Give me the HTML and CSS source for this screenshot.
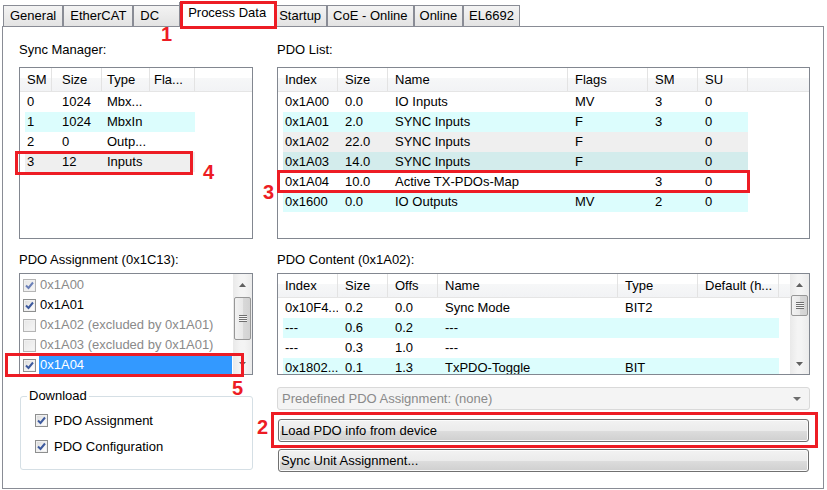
FILE: index.html
```html
<!DOCTYPE html>
<html>
<head>
<meta charset="utf-8">
<title>Process Data</title>
<link rel="stylesheet" href="styles.css">
</head>
<body>
<div class="tabstrip">
  <div class="tab">General</div>
  <div class="tab">EtherCAT</div>
  <div class="tab tab-dc">DC</div>
  <div class="tab active">Process Data</div>
  <div class="tab">Startup</div>
  <div class="tab">CoE - Online</div>
  <div class="tab">Online</div>
  <div class="tab">EL6692</div>
</div>

<div class="page">
  <div class="col left">
    <div class="label">Sync Manager:</div>
    <div class="lv sm">
      <div class="lv-main">
        <div class="lv-head">
          <div class="hc c1">SM</div><div class="hc c2">Size</div><div class="hc c3">Type</div><div class="hc c4">Fla...</div><div class="hfill"></div>
        </div>
        <div class="row"><div class="cell c1">0</div><div class="cell c2">1024</div><div class="cell c3">Mbx...</div><div class="cell c4"></div></div>
        <div class="row cyan"><div class="cell c1">1</div><div class="cell c2">1024</div><div class="cell c3">MbxIn</div><div class="cell c4"></div></div>
        <div class="row"><div class="cell c1">2</div><div class="cell c2">0</div><div class="cell c3">Outp...</div><div class="cell c4"></div></div>
        <div class="row gray"><div class="cell c1">3</div><div class="cell c2">12</div><div class="cell c3">Inputs</div><div class="cell c4"></div></div>
      </div>
    </div>

    <div class="label second">PDO Assignment (0x1C13):</div>
    <div class="cl">
      <div class="cl-main">
        <div class="cl-row dis"><span class="cb dis"><svg width="9" height="9" viewBox="0 0 9 9"><polyline points="1,4.5 3.5,7 8,1.5" fill="none" stroke="#6b80b8" stroke-width="2"/></svg></span><span class="cl-text">0x1A00</span></div>
        <div class="cl-row"><span class="cb"><svg width="9" height="9" viewBox="0 0 9 9"><polyline points="1,4.5 3.5,7 8,1.5" fill="none" stroke="#3d5a9e" stroke-width="2"/></svg></span><span class="cl-text">0x1A01</span></div>
        <div class="cl-row dis"><span class="cb dis"></span><span class="cl-text">0x1A02 (excluded by 0x1A01)</span></div>
        <div class="cl-row dis"><span class="cb dis"></span><span class="cl-text">0x1A03 (excluded by 0x1A01)</span></div>
        <div class="cl-row sel"><span class="cb"><svg width="9" height="9" viewBox="0 0 9 9"><polyline points="1,4.5 3.5,7 8,1.5" fill="none" stroke="#3d5a9e" stroke-width="2"/></svg></span><span class="cl-text">0x1A04</span></div>
      </div>
      <div class="sb">
        <div class="sb-btn"><svg width="7" height="4" viewBox="0 0 7 4"><polygon points="0,4 7,4 3.5,0" fill="#606060"/></svg></div>
        <div class="sb-track"><div class="sb-thumb tall"><span class="grip"></span></div></div>
        <div class="sb-btn"><svg width="7" height="4" viewBox="0 0 7 4"><polygon points="0,0 7,0 3.5,4" fill="#606060"/></svg></div>
      </div>
    </div>

    <fieldset class="group">
      <legend>Download</legend>
      <div class="opt"><span class="cb"><svg width="9" height="9" viewBox="0 0 9 9"><polyline points="1,4.5 3.5,7 8,1.5" fill="none" stroke="#3d5a9e" stroke-width="2"/></svg></span><span>PDO Assignment</span></div>
      <div class="opt"><span class="cb"><svg width="9" height="9" viewBox="0 0 9 9"><polyline points="1,4.5 3.5,7 8,1.5" fill="none" stroke="#3d5a9e" stroke-width="2"/></svg></span><span>PDO Configuration</span></div>
    </fieldset>
  </div>

  <div class="col right">
    <div class="label">PDO List:</div>
    <div class="lv pl">
      <div class="lv-main">
        <div class="lv-head">
          <div class="hc c1">Index</div><div class="hc c2">Size</div><div class="hc c3">Name</div><div class="hc c4">Flags</div><div class="hc c5">SM</div><div class="hc c6">SU</div><div class="hfill"></div>
        </div>
        <div class="row"><div class="cell c1">0x1A00</div><div class="cell c2">0.0</div><div class="cell c3">IO Inputs</div><div class="cell c4">MV</div><div class="cell c5">3</div><div class="cell c6">0</div></div>
        <div class="row cyan"><div class="cell c1">0x1A01</div><div class="cell c2">2.0</div><div class="cell c3">SYNC Inputs</div><div class="cell c4">F</div><div class="cell c5">3</div><div class="cell c6">0</div></div>
        <div class="row gray"><div class="cell c1">0x1A02</div><div class="cell c2">22.0</div><div class="cell c3">SYNC Inputs</div><div class="cell c4">F</div><div class="cell c5"></div><div class="cell c6">0</div></div>
        <div class="row teal"><div class="cell c1">0x1A03</div><div class="cell c2">14.0</div><div class="cell c3">SYNC Inputs</div><div class="cell c4">F</div><div class="cell c5"></div><div class="cell c6">0</div></div>
        <div class="row"><div class="cell c1">0x1A04</div><div class="cell c2">10.0</div><div class="cell c3">Active TX-PDOs-Map</div><div class="cell c4"></div><div class="cell c5">3</div><div class="cell c6">0</div></div>
        <div class="row cyan"><div class="cell c1">0x1600</div><div class="cell c2">0.0</div><div class="cell c3">IO Outputs</div><div class="cell c4">MV</div><div class="cell c5">2</div><div class="cell c6">0</div></div>
      </div>
    </div>

    <div class="label second">PDO Content (0x1A02):</div>
    <div class="lv pc short">
      <div class="lv-main">
        <div class="lv-head">
          <div class="hc c1">Index</div><div class="hc c2">Size</div><div class="hc c3">Offs</div><div class="hc c4">Name</div><div class="hc c5">Type</div><div class="hc c6">Default (h...</div><div class="hfill"></div>
        </div>
        <div class="row"><div class="cell c1">0x10F4...</div><div class="cell c2">0.2</div><div class="cell c3">0.0</div><div class="cell c4">Sync Mode</div><div class="cell c5">BIT2</div><div class="cell c6"></div></div>
        <div class="row cyan"><div class="cell c1">---</div><div class="cell c2">0.6</div><div class="cell c3">0.2</div><div class="cell c4">---</div><div class="cell c5"></div><div class="cell c6"></div></div>
        <div class="row"><div class="cell c1">---</div><div class="cell c2">0.3</div><div class="cell c3">1.0</div><div class="cell c4">---</div><div class="cell c5"></div><div class="cell c6"></div></div>
        <div class="row cyan"><div class="cell c1">0x1802...</div><div class="cell c2">0.1</div><div class="cell c3">1.3</div><div class="cell c4">TxPDO-Toggle</div><div class="cell c5">BIT</div><div class="cell c6"></div></div>
      </div>
      <div class="sb">
        <div class="sb-btn"><svg width="7" height="4" viewBox="0 0 7 4"><polygon points="0,4 7,4 3.5,0" fill="#606060"/></svg></div>
        <div class="sb-track"><div class="sb-thumb small"><span class="grip"></span></div></div>
        <div class="sb-btn"><svg width="7" height="4" viewBox="0 0 7 4"><polygon points="0,0 7,0 3.5,4" fill="#606060"/></svg></div>
      </div>
    </div>

    <div class="combo"><span>Predefined PDO Assignment: (none)</span><svg width="8" height="4" viewBox="0 0 8 4"><polygon points="0,0 8,0 4,4" fill="#6d6d6d"/></svg></div>
    <div class="btn">Load PDO info from device</div>
    <div class="btn">Sync Unit Assignment...</div>
  </div>
</div>

<div class="mark m1"></div>
<div class="mark m4"></div>
<div class="mark m3"></div>
<div class="mark m5"></div>
<div class="mark m2"></div>
<div class="num n1">1</div>
<div class="num n4">4</div>
<div class="num n3">3</div>
<div class="num n5">5</div>
<div class="num n2">2</div>
</body>
</html>
```

FILE: styles.css
```css
* { box-sizing: border-box; }

body {
  margin: 0;
  width: 827px;
  height: 490px;
  overflow: hidden;
  background: #fff;
  font-family: "Liberation Sans", Arial, sans-serif;
  font-size: 13px;
  color: #000;
  position: relative;
}

/* ---------- tabs ---------- */
.tabstrip {
  display: flex;
  align-items: flex-end;
  height: 26px;
  padding-left: 3px;
  position: relative;
  z-index: 1;
}
.tab {
  height: 21px;
  line-height: 20px;
  padding: 0 6px;
  border: 1px solid #898c95;
  border-bottom: none;
  background: linear-gradient(#f3f3f3, #e3e3e3);
  white-space: nowrap;
}
.tab-dc { padding-right: 21px; }
.tab.active {
  height: 25px;
  margin: 0 -2px -1px -2px;
  padding: 0 8px;
  background: #fff;
  position: relative;
  z-index: 2;
}
.tab.active ~ .tab { padding: 0 5px; }

/* ---------- page ---------- */
.page {
  display: flex;
  gap: 24px;
  margin-left: 2px;
  width: 822px;
  height: 463px;
  border: 1px solid #898c95;
  padding: 15px 13px 0 16px;
}
.col { display: flex; flex-direction: column; }
.left { width: 234px; }
.right { width: 533px; }

.label { height: 16px; line-height: 16px; white-space: nowrap; }
.label.second { margin-top: 13px; }

/* ---------- list views ---------- */
.lv {
  display: flex;
  margin-top: 9px;
  height: 172px;
  border: 1px solid #828790;
  background: #fff;
}
.lv.short { margin-top: 5px; height: 102px; }
.lv-main { flex: 1; min-width: 0; overflow: hidden; }
.lv-head {
  display: flex;
  height: 24px;
  border-bottom: 1px solid #e5e5e5;
  background: linear-gradient(#ffffff 0%, #ffffff 45%, #f6f7f8 45%, #f2f3f5 100%);
}
.hc {
  flex: none;
  height: 23px;
  line-height: 23px;
  padding-left: 7px;
  border-right: 1px solid #e3e3e3;
  white-space: nowrap;
  overflow: hidden;
}
.hfill { flex: 1; }
.row {
  display: flex;
  width: max-content;
  height: 20px;
  line-height: 20px;
  margin-left: 5px;
}
.cell { flex: none; padding-left: 7px; white-space: nowrap; overflow: hidden; }
.cell.c1 { padding-left: 2px; }
.row.cyan { background: #dcfdfd; }
.row.gray { background: #efefef; }
.row.teal { background: #d3ecec; }

/* sync manager columns */
.sm .c1 { width: 27px; }
.sm .hc.c1 { width: 32px; }
.sm .c2 { width: 50px; padding-left: 10px; }
.sm .c3 { width: 48px; padding-left: 5px; }
.sm .c4 { width: 45px; padding-left: 4px; }

/* pdo list columns */
.pl .c1 { width: 55px; }
.pl .hc.c1 { width: 60px; }
.pl .c2 { width: 50px; }
.pl .c3 { width: 180px; }
.pl .c4 { width: 80px; }
.pl .c5 { width: 50px; }
.pl .c6 { width: 50px; }

/* pdo content columns */
.pc .c1 { width: 55px; }
.pc .hc.c1 { width: 60px; }
.pc .c2 { width: 50px; }
.pc .c3 { width: 50px; }
.pc .c4 { width: 180px; }
.pc .c5 { width: 80px; }
.pc .c6 { width: 81px; }
.pc .hfill { flex: 1; }

/* ---------- scrollbars ---------- */
.sb {
  flex: none;
  width: 19px;
  display: flex;
  flex-direction: column;
  background: linear-gradient(to right, #e9e9e9, #f4f4f4 40%, #f4f4f4 60%, #ebebeb);
}
.sb-btn {
  height: 21px;
  flex: none;
  display: flex;
  align-items: center;
  justify-content: center;
}
.sb-track { flex: 1; padding: 0 1px; }
.sb-thumb {
  border: 1px solid #979797;
  border-radius: 2px;
  background: linear-gradient(to right, #f2f2f2, #e8e8e8 50%, #d9d9d9 51%, #d2d2d2);
  display: flex;
  align-items: center;
  justify-content: center;
}
.sb-thumb.tall { margin-top: 2px; height: 43px; }
.sb-thumb.small { margin-top: 0; height: 21px; }
.grip {
  width: 8px;
  height: 7px;
  background: repeating-linear-gradient(#6f6f6f 0, #6f6f6f 1px, #f4f4f4 1px, #f4f4f4 2px);
}

/* ---------- checked list ---------- */
.cl {
  display: flex;
  margin-top: 5px;
  height: 102px;
  border: 1px solid #828790;
  background: #fff;
}
.cl-main { flex: 1; min-width: 0; padding: 1px 0 0 3px; overflow: hidden; }
.cl-row { display: flex; align-items: center; height: 20px; }
.cl-text { margin-left: 3px; padding-left: 1px; height: 20px; line-height: 20px; white-space: nowrap; }
.cl-row.dis .cl-text { color: #8a8a8a; }
.cl-row.sel .cl-text { flex: 1; margin-right: 1px; background: #3399ff; color: #fff; }

.cb {
  flex: none;
  width: 13px;
  height: 13px;
  border: 1px solid #8e8f8f;
  background: linear-gradient(135deg, #d6d6d6, #f4f4f4 60%, #ffffff);
  box-shadow: inset 0 0 0 1px #f0f0f0;
  display: flex;
  align-items: center;
  justify-content: center;
}
.cb.dis { border-color: #b5b5b5; background: linear-gradient(135deg, #e6e6e6, #f7f7f7); }

/* ---------- download group ---------- */
.group {
  margin: 13px 0 0 1px;
  width: 233px;
  min-inline-size: 0;
  border: 1px solid #d5dfe5;
  border-radius: 3px;
  padding: 6px 0 13px 14px;
}
.group legend { padding: 0 2px; margin-left: -8px; line-height: 16px; }
.opt { display: flex; align-items: center; height: 20px; }
.opt + .opt { margin-top: 6px; }
.opt .cb + span { margin-left: 6px; }

/* ---------- combo & buttons ---------- */
.combo {
  margin-top: 12px;
  height: 23px;
  display: flex;
  align-items: center;
  justify-content: space-between;
  padding: 0 8px 0 4px;
  border: 1px solid #d9d9d9;
  border-radius: 3px;
  background: #f4f4f4;
  color: #8a8a8a;
  white-space: nowrap;
}
.btn {
  margin: 9px 1px 0;
  height: 23px;
  line-height: 21px;
  padding-left: 2px;
  border: 1px solid #707070;
  border-radius: 3px;
  background: linear-gradient(#f2f2f2 0%, #ebebeb 50%, #dddddd 51%, #cfcfcf 100%);
  box-shadow: inset 0 0 0 1px #fbfbfb;
  white-space: nowrap;
}
.btn + .btn { margin-top: 7px; }

/* ---------- annotations ---------- */
.mark {
  position: absolute;
  border: 3px solid #ed1c24;
  z-index: 5;
}
.m1 { left: 180px; top: 1px; width: 97px; height: 28px; }
.m4 { left: 15px; top: 151px; width: 178px; height: 24px; }
.m3 { left: 277px; top: 170px; width: 473px; height: 23px; }
.m5 { left: 5px; top: 353px; width: 239px; height: 24px; }
.m2 { left: 271px; top: 412px; width: 547px; height: 36px; }

.num {
  position: absolute;
  z-index: 5;
  color: #ed1c24;
  font-weight: bold;
  font-size: 20px;
  line-height: 20px;
}
.n1 { left: 161px; top: 24px; }
.n4 { left: 203px; top: 162px; }
.n3 { left: 263px; top: 182px; }
.n5 { left: 232px; top: 378px; }
.n2 { left: 257px; top: 417px; }
```
